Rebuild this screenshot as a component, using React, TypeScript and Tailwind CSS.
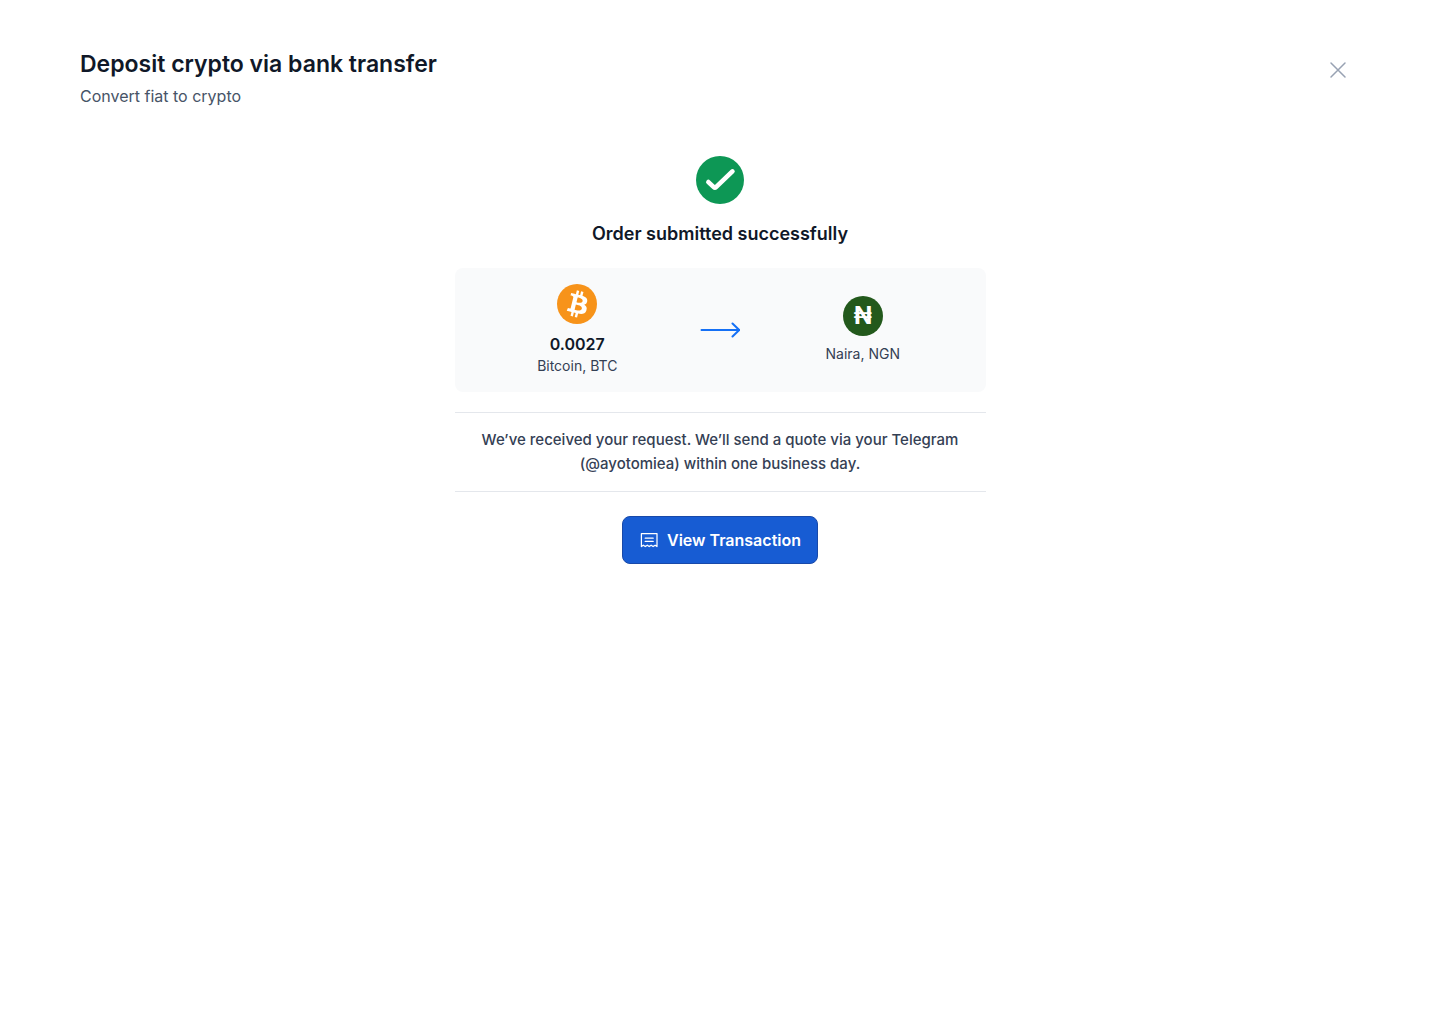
import type { ReactNode } from 'react';

interface AssetProps {
  icon: ReactNode;
  amount?: string;
  label: string;
}

function CloseIcon() {
  return (
    <svg width="24" height="24" viewBox="0 0 24 24" fill="none" stroke="currentColor" strokeWidth="1.5" strokeLinecap="round" aria-hidden="true">
      <path d="M5 5l14 14M19 5L5 19" />
    </svg>
  );
}

function SuccessIcon() {
  return (
    <svg className="size-12" viewBox="0 0 48 48" fill="none" aria-hidden="true">
      <circle cx="24" cy="24" r="24" fill="#0D9755" />
      <path d="M12.4 26.1l5.4 5a1.6 1.6 0 0 0 2.2 0L36.4 15.4" stroke="white" strokeWidth="4.7" strokeLinecap="round" strokeLinejoin="round" />
    </svg>
  );
}

function BitcoinIcon() {
  return (
    <svg className="size-10" viewBox="0 0 32 32" aria-hidden="true">
      <circle cx="16" cy="16" r="16" fill="#F7931A" />
      <path transform="translate(-1.1 -1.5) scale(1.09)" fill="white" fillRule="evenodd" d="M23.189 14.02c.314-2.096-1.283-3.223-3.465-3.975l.708-2.84-1.728-.43-.69 2.765c-.454-.114-.92-.22-1.385-.326l.695-2.783L15.596 6l-.708 2.839c-.376-.086-.746-.17-1.104-.26l.002-.009-2.384-.595-.46 1.846s1.283.294 1.256.312c.7.175.826.638.805 1.006l-.806 3.235c.048.012.11.03.18.057l-.183-.045-1.13 4.532c-.086.212-.303.531-.793.41.018.025-1.256-.313-1.256-.313l-.858 1.978 2.25.561c.418.105.828.215 1.231.318l-.715 2.872 1.727.43.708-2.84c.472.127.93.245 1.378.357l-.706 2.828 1.728.43.715-2.866c2.948.558 5.164.333 6.097-2.333.752-2.146-.037-3.385-1.588-4.192 1.13-.26 1.98-1.003 2.207-2.538zm-3.95 5.538c-.533 2.147-4.148.986-5.32.695l.95-3.805c1.172.293 4.929.872 4.37 3.11zm.535-5.569c-.487 1.953-3.495.96-4.47.717l.86-3.45c.975.243 4.118.696 3.61 2.733z" />
    </svg>
  );
}

function NairaIcon() {
  return <span className="flex size-10 items-center justify-center rounded-full bg-[#23591C] text-2xl leading-none font-bold text-white" aria-hidden="true">₦</span>;
}

function ArrowIcon() {
  return (
    <svg className="h-5 w-10 shrink-0 text-[#1570F5]" viewBox="0 0 40 20" fill="none" stroke="currentColor" strokeWidth="2" strokeLinecap="round" strokeLinejoin="round" aria-hidden="true">
      <path d="M1.5 10h38M32.5 3.5l6.7 6.5-6.7 6.5" />
    </svg>
  );
}

function ReceiptIcon() {
  return (
    <svg className="size-5" viewBox="0 0 20 20" fill="none" stroke="currentColor" strokeWidth="1.25" strokeLinecap="round" strokeLinejoin="round" aria-hidden="true">
      <path d="M2.4 3.6h15.6v13l-1.9-1.4-2 1.4-2-1.4-1.9 1.4-1.9-1.4-2 1.4-2-1.4-1.9 1.4z" />
      <path d="M6.2 8.2h8M6.2 11.4h8" />
    </svg>
  );
}

function Asset({ icon, amount, label }: AssetProps) {
  return (
    <div className="flex flex-1 flex-col items-center">
      {icon}
      <div className="mt-2 text-center">
        {amount && <p className="text-base font-semibold text-[#101828]">{amount}</p>}
        <p className="text-sm text-[#344054]">{label}</p>
      </div>
    </div>
  );
}

export default function App() {
  return (
    <div className="min-h-screen bg-white font-['Inter',sans-serif]">
      <header className="flex items-start justify-between px-20 pt-12">
        <div className="flex flex-col gap-1">
          <h1 className="text-[23px] leading-8 font-semibold text-[#101828]">Deposit crypto via bank transfer</h1>
          <p className="text-base text-[#475467]">Convert fiat to crypto</p>
        </div>
        <button type="button" className="flex size-11 items-center justify-center rounded-lg text-[#98A2B3]" aria-label="Close"><CloseIcon /></button>
      </header>

      <main className="mx-auto mt-12 flex w-full max-w-[531px] flex-col items-center">
        <SuccessIcon />
        <h2 className="mt-4 text-lg leading-7 font-semibold text-[#101828]">Order submitted successfully</h2>

        <section className="mt-5 flex w-full items-center rounded-lg bg-[#F9FAFB] py-4">
          <Asset icon={<BitcoinIcon />} amount="0.0027" label="Bitcoin, BTC" />
          <ArrowIcon />
          <Asset icon={<NairaIcon />} label="Naira, NGN" />
        </section>

        <p className="mt-5 w-full border-y border-[#E4E7EC] px-4 py-[15px] text-center text-[15px] leading-6 font-medium text-[#344054]">
          We’ve received your request. We’ll send a quote via your Telegram (@ayotomiea) within one business day.
        </p>

        <button type="button" className="mt-6 flex h-12 items-center gap-2 rounded-lg border border-[#1849A9] bg-[#175CD3] px-4 text-base font-semibold text-white">
          <ReceiptIcon />
          View Transaction
        </button>
      </main>
    </div>
  );
}
